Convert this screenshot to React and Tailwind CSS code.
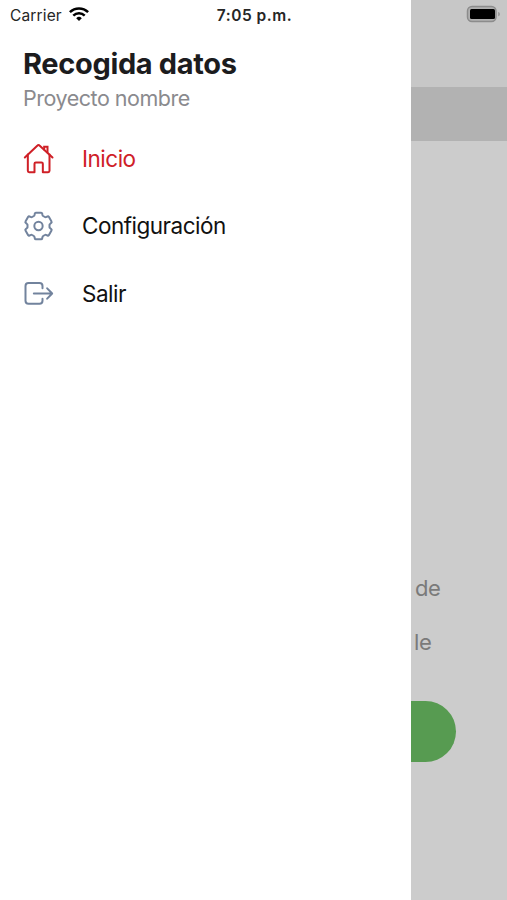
function HomeIcon({ className }) {
  return (
    <svg className={className} viewBox="13.5 13.5 96 96" fill="none" stroke="currentColor" strokeWidth="6" strokeLinecap="round" strokeLinejoin="round">
      <path d="M31 48v49a4 4 0 0 0 4 4h16V76a4 4 0 0 1 4-4h17a4 4 0 0 1 4 4v25h16a4 4 0 0 0 4-4V48" />
      <path d="M105 57 66 21a4 4 0 0 0-6 0L22 57" />
      <path d="M90 42V25h-10v8" strokeLinejoin="miter" />
    </svg>
  );
}

function SettingsIcon({ className }) {
  return (
    <svg className={className} viewBox="-49.5 -48 96 96" fill="none" stroke="currentColor" strokeWidth="6" strokeLinecap="round" strokeLinejoin="round">
      <path d="M-8-40H8Q10.500-40 11-37.500L12-33Q12.500-31 14-30L19-27Q20.500-26 22-26.500L27-28.500Q29.500-29.500 31-27.500L39-13.500Q40.500-11.500 38.500-9.500L34.500-6Q33-5 33-3.500V3.500Q33 5 34.500 6L38.500 9.500Q40.500 11.500 39 13.500L31 27.500Q29.500 29.500 27 28.500L22 26.500Q20.500 26 19 27L14 30Q12.500 31 12 33L11 37.500Q10.500 40 8 40H-8Q-10.500 40-11 37.500L-12 33Q-12.500 31-14 30L-19 27Q-20.500 26-22 26.500L-27 28.500Q-29.500 29.500-31 27.500L-39 13.500Q-40.500 11.500-38.500 9.500L-34.500 6Q-33 5-33 3.500V-3.500Q-33-5-34.500-6L-38.500-9.500Q-40.500-11.500-39-13.500L-31-27.500Q-29.500-29.500-27-28.500L-22-26.500Q-20.500-26-19-27L-14-30Q-12.500-31-12-33L-11-37.500Q-10.500-40-8-40Z" />
      <circle r="12.5" />
    </svg>
  );
}

function ExitIcon({ className }) {
  return (
    <svg className={className} viewBox="13.5 18 96 96" fill="none" stroke="currentColor" strokeWidth="6" strokeLinecap="round" strokeLinejoin="round">
      <path d="M75 49V42a9 9 0 0 0-9-9H33a9 9 0 0 0-9 9v44a9 9 0 0 0 9 9h33a9 9 0 0 0 9-9v-6" />
      <path d="m89 49 15 15.500-15 15.500M49 64.500h54" />
    </svg>
  );
}

const menuItems = [
  { label: 'Inicio', icon: HomeIcon, active: true },
  { label: 'Configuración', icon: SettingsIcon },
  { label: 'Salir', icon: ExitIcon },
];

function StatusBar() {
  return (
    <div className="absolute inset-x-0 top-0 grid h-[31px] grid-cols-3 items-center pl-[9px] pr-[7px] text-[#262626]">
      <div className="flex items-center gap-[7px] pl-px">
        <span className="text-[15.5px] leading-none tracking-[0.15px]">Carrier</span>
        <svg className="-mt-1 h-[14px] w-5" viewBox="0 0 20 14" fill="none" stroke="#000" strokeWidth="2.5">
          <path d="M0.9 5.2a13 13 0 0 1 18.2 0" />
          <path d="M4.3 8.7a8.1 8.1 0 0 1 11.4 0" />
          <path d="M10 14l-2.8-2.8a4 4 0 0 1 5.6 0z" fill="#000" stroke="none" />
        </svg>
      </div>
      <span className="text-center text-[15.5px] font-semibold leading-none tracking-[0.5px]">7:05 p.m.</span>
      <svg className="-mt-[3px] h-[18px] w-[34px] justify-self-end" viewBox="0 0 34 18" fill="none">
        <rect x="1.5" y="1.5" width="28.5" height="15" rx="4.5" fill="#b0b0b0" stroke="#8c8c8c" strokeWidth="1.5" />
        <rect x="4" y="4" width="25" height="10" rx="1.5" fill="#000" />
        <path d="M32.3 7c1.9.6 1.9 3.700 0 4.3z" fill="#8c8c8c" />
      </svg>
    </div>
  );
}

function MenuItem({ item }) {
  const Icon = item.icon;

  return (
    <a href="#" className="flex h-[67.5px] items-center gap-[28px]">
      <Icon className={item.active ? 'size-8 text-[#cf2027]' : 'size-8 text-[#72839d]'} />
      <span
        className={
          item.active
            ? 'text-[22.5px] tracking-[-0.5px] text-[#cf2027]'
            : 'text-[22.5px] tracking-[-0.5px] text-[#111]'
        }
      >
        {item.label}
      </span>
    </a>
  );
}

function Drawer() {
  return (
    <aside className="w-[411px] shrink-0 bg-white pt-[45px]">
      <div className="pl-[23px]">
        <h1 className="text-[29px] font-bold leading-[38px] tracking-[-0.35px] text-[#1c1c1e]">Recogida datos</h1>
        <p className="text-[21.5px] leading-[31px] tracking-[-0.48px] text-[#8a8a8e]">Proyecto nombre</p>
      </div>
      <nav className="mt-[11px] pl-[22px]">
        {menuItems.map((item) => (
          <MenuItem key={item.label} item={item} />
        ))}
      </nav>
    </aside>
  );
}

function Screen() {
  return (
    <main className="flex flex-1 flex-col overflow-hidden bg-[#ccc]">
      <div className="h-[87px] shrink-0 bg-[#c7c7c7]" />
      <div className="h-[54px] shrink-0 bg-[#b2b2b2]" />
      <div className="mt-[420px] pl-[4px] text-[22px] leading-[54px] tracking-[-0.4px] text-[#7a7a7a]">
        <p>de</p>
        <p className="-ml-px">le</p>
      </div>
      <div className="mt-[31.5px] h-[61px] w-[45px] rounded-r-full bg-[#579b51]" />
    </main>
  );
}

export default function App() {
  return (
    <div className="relative flex h-[900px] w-[507px] overflow-hidden bg-white font-['Inter','Liberation_Sans',sans-serif]">
      <Drawer />
      <Screen />
      <StatusBar />
    </div>
  );
}
